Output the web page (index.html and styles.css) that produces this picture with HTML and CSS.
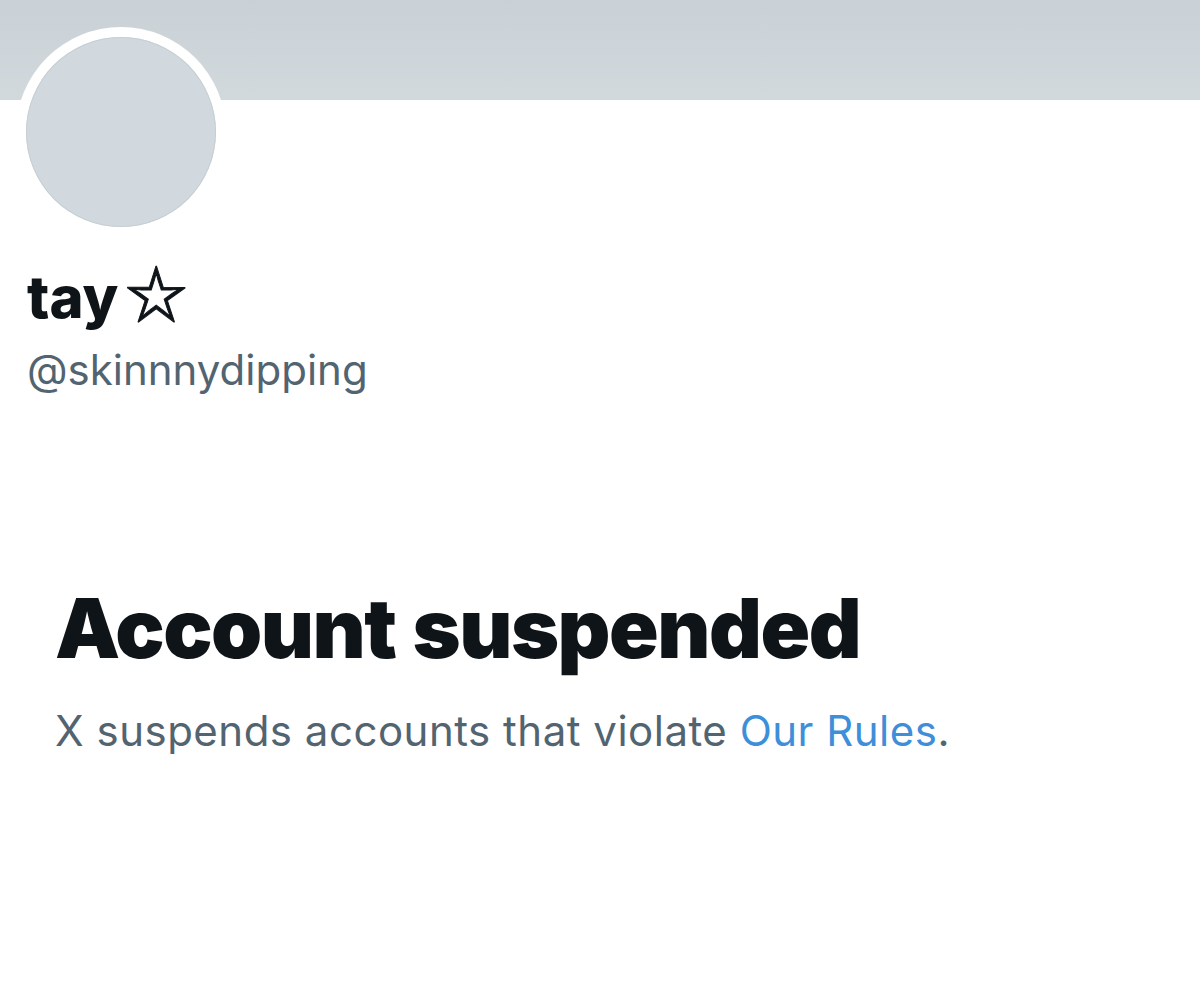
FILE: index.html
```html
<!DOCTYPE html>
<html lang="en">
<head>
<meta charset="utf-8">
<title>tay☆ (@skinnnydipping)</title>
<link rel="stylesheet" href="styles.css">
</head>
<body>
<div class="page">
  <div class="banner"></div>
  <div class="profile">
    <div class="avatar"><div class="avatar-inner"></div></div>
    <div class="names">
      <div class="display-name">tay<span class="star">☆</span></div>
      <div class="handle">@skinnnydipping</div>
    </div>
  </div>
  <div class="notice">
    <h1 class="notice-title">Account suspended</h1>
    <p class="notice-text">X suspends accounts that violate <a class="rules-link" href="#">Our Rules</a>.</p>
  </div>
</div>
</body>
</html>
```
FILE: styles.css
```css
html, body {
  margin: 0;
  padding: 0;
  background: #ffffff;
}
body {
  font-family: Inter, "Noto Sans", "Liberation Sans", sans-serif;
  color: #0f1419;
}
.page {
  width: 1200px;
  height: 992px;
  overflow: hidden;
}
.banner {
  height: 100px;
  background: linear-gradient(180deg, #c9d1d6 0%, #d1d9dd 100%);
}
.profile {
  padding-left: 16px;
}
.avatar {
  width: 210px;
  height: 210px;
  margin-top: -73px;
  border-radius: 50%;
  background: #ffffff;
  padding: 10px;
  box-sizing: border-box;
}
.avatar-inner {
  width: 100%;
  height: 100%;
  border-radius: 50%;
  background: #d1d9de;
  box-shadow: inset 0 0 0 1px #c6cfd4;
}
.names {
  padding-left: 11px;
  margin-top: 27px;
}
.display-name {
  font-size: 58px;
  font-weight: 800;
  line-height: 66px;
  letter-spacing: 0;
}
.star {
  font-family: "Noto Sans CJK JP", "DejaVu Sans", sans-serif;
  font-weight: 700;
  font-size: 62px;
  line-height: 0;
  margin-left: 7px;
  -webkit-text-stroke: 1px #0f1419;
}
.handle {
  margin-top: 13px;
  font-size: 42px;
  line-height: 54px;
  color: #536471;
}
.notice {
  padding: 0 55px;
  margin-top: 182px;
}
.notice-title {
  margin: 0;
  font-size: 82px;
  font-weight: 900;
  line-height: 100px;
  letter-spacing: -1.5px;
  word-spacing: 2px;
}
.notice-text {
  margin: 27px 0 0;
  font-size: 42px;
  line-height: 50px;
  letter-spacing: 0.5px;
  color: #536471;
}
.rules-link {
  color: #3d8fd9;
  text-decoration: none;
}
```
